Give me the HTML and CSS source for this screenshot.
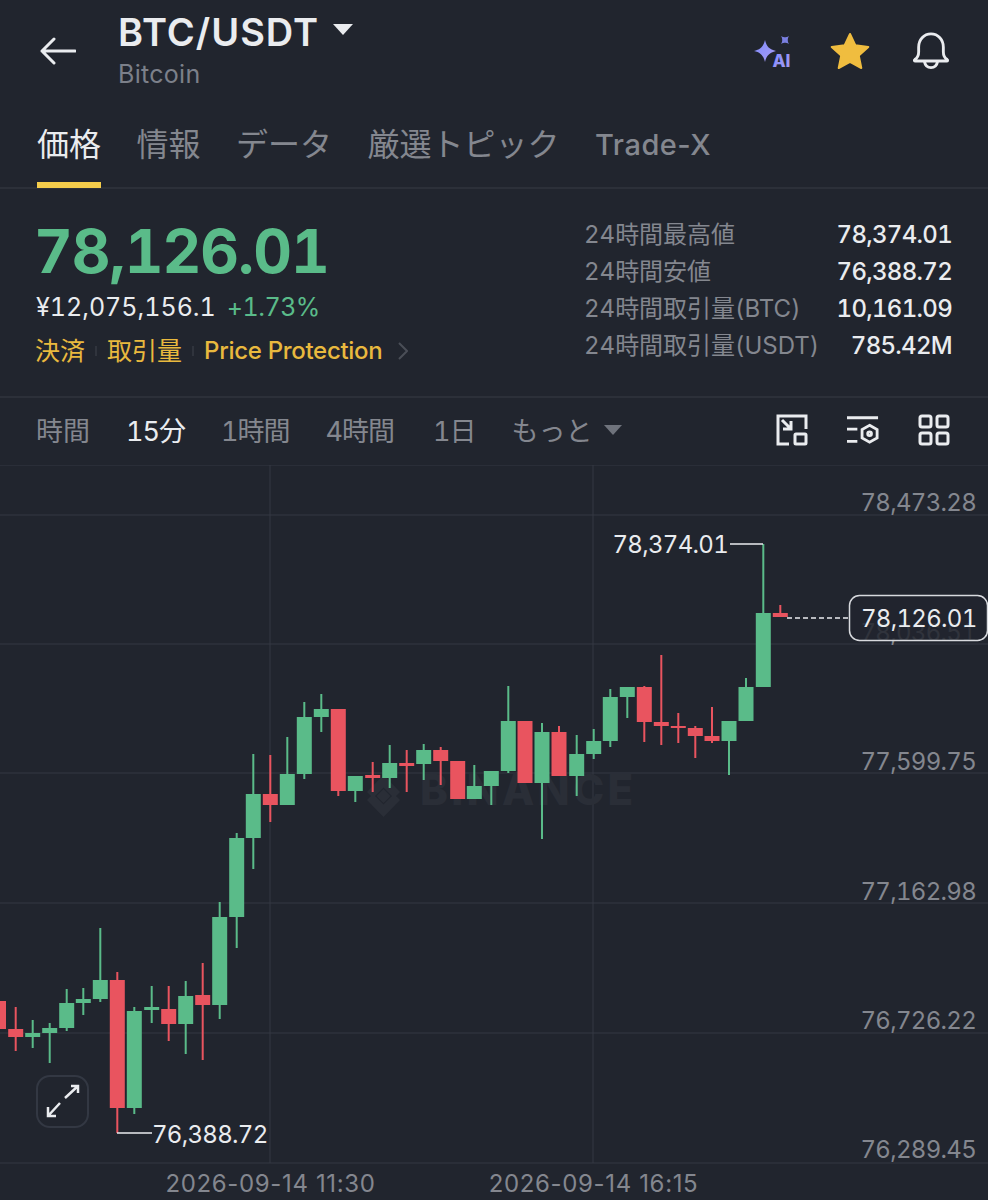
FILE: index.html
```html
<!DOCTYPE html>
<html lang="ja">
<head>
    <meta charset="UTF-8">
    <meta name="viewport" content="width=device-width, initial-scale=1.0">
    <title>BTC/USDT</title>
    <link rel="stylesheet" href="styles.css">
</head>
<body>
    <header class="top-bar">
        <svg class="back-icon" viewBox="0 0 36 28"><path d="M35 14H2M14 2L2 14l12 12"/></svg>
        <div class="pair">
            <div class="pair-name">BTC/USDT <span class="pair-caret"></span></div>
            <div class="pair-sub">Bitcoin</div>
        </div>
        <div class="top-actions">
            <svg class="icon-ai" viewBox="0 0 38 32">
                <defs>
                    <linearGradient id="ai-grad" x1="0" y1="0" x2="1" y2="1">
                        <stop offset="0" stop-color="#7f8cff"/>
                        <stop offset="1" stop-color="#a99cf0"/>
                    </linearGradient>
                </defs>
                <path class="spark" d="M11 4c1.500 6.500 4.500 9.500 11 11-6.500 1.500-9.500 4.500-11 11-1.500-6.500-4.500-9.500-11-11 6.500-1.500 9.500-4.500 11-11z"/>
                <path class="spark-small" d="M27 0c2 1.200 3 1.200 4 1.200S33 1.200 35 0c-1.200 2-1.200 3-1.200 4s0 2 1.200 4c-2-1.200-3-1.200-4-1.200S29 6.800 27 8c1.200-2 1.200-3 1.200-4S28.200 2 27 0z"/>
                <text class="ai-text" x="18.500" y="31">AI</text>
            </svg>
            <svg class="icon-star" viewBox="0 0 40 38"><path d="M20 2l5.300 11.200 13 1.700-9.500 8.700 2.500 12.400L20 29.800 8.700 36l2.500-12.400L1.700 14.900l13-1.700z"/></svg>
            <svg class="icon-bell" viewBox="0 0 40 40"><path d="M3 29c3-2 4-4 4-8v-5c0-8 5.500-14 13-14s13 6 13 14v5c0 4 1 6 4 8 1 .8.500 1.500-.5 1.500h-33C2.500 30.500 2 29.800 3 29zM13 31c.8 4 3.500 6.500 7 6.500s6.200-2.500 7-6.500"/></svg>
        </div>
    </header>

    <nav class="tabs">
        <a class="tab active">価格</a>
        <a class="tab">情報</a>
        <a class="tab">データ</a>
        <a class="tab">厳選トピック</a>
        <a class="tab tab-latin">Trade-X</a>
    </nav>

    <section class="stats">
        <div class="stats-left">
            <div class="last-price">78,126.01</div>
            <div class="fiat-row">
                <span class="fiat">¥12,075,156.1</span>
                <span class="change">+1.73%</span>
            </div>
            <div class="tag-row">
                <span>決済</span>
                <i class="tag-sep"></i>
                <span>取引量</span>
                <i class="tag-sep"></i>
                <span class="tag-latin">Price Protection</span>
                <svg class="tag-more" viewBox="0 0 10 18"><path d="M1 1l8 8-8 8"/></svg>
            </div>
        </div>
        <dl class="stats-right">
            <dt>24時間最高値</dt><dd>78,374.01</dd>
            <dt>24時間安値</dt><dd>76,388.72</dd>
            <dt>24時間取引量(BTC)</dt><dd>10,161.09</dd>
            <dt>24時間取引量(USDT)</dt><dd>785.42M</dd>
        </dl>
    </section>

    <div class="toolbar">
        <span class="range">時間</span>
        <span class="range range-num active">15分</span>
        <span class="range range-num">1時間</span>
        <span class="range range-num">4時間</span>
        <span class="range range-num range-day">1日</span>
        <span class="range">もっと</span>
        <span class="more-caret"></span>
        <div class="tool-icons">
            <svg class="tool-icon" viewBox="0 0 32 32">
                <path d="M13 30H2V2h28v13M6 6l9 9M15 7v8H7"/>
                <rect x="19" y="20" width="11" height="10" rx="1"/>
            </svg>
            <svg class="tool-icon" viewBox="0 0 34 32">
                <path d="M0 3h33M0 15h11M0 28h11M24 11l8 4.500v9L24 29l-8-4.500v-9z"/>
                <circle cx="24" cy="20" r="2"/>
            </svg>
            <svg class="tool-icon" viewBox="0 0 32 32">
                <rect x="2" y="2" width="11" height="11" rx="2"/>
                <rect x="19" y="2" width="11" height="11" rx="2"/>
                <rect x="2" y="19" width="11" height="11" rx="2"/>
                <rect x="19" y="19" width="11" height="11" rx="2"/>
            </svg>
        </div>
    </div>

    <div class="chart">
        <!-- viewBox keeps the screen's y values so candles read as pixel prices -->
        <svg class="chart-svg" viewBox="0 465 988 735">
            <path class="grid" d="M0 465H988M0 515H988M0 644H988M0 773H988M0 903H988M0 1033H988M0 1163H988M270 465V1163M593 465V1163"/>

            <text class="watermark" x="420" y="805">BINANCE</text>
            <path class="watermark-logo" d="M383.500 789l7 7-7 7-7-7zM367 800l6-6 10.500 10.500L394 794l6 6-16.500 17zM383.500 775l16.500 17-6 6-10.500-10.500L373 798l-6-6z"/>

            <g class="axis">
                <text x="976" y="511">78,473.28</text>
                <text x="976" y="641">78,036.51</text>
                <text x="976" y="770">77,599.75</text>
                <text x="976" y="900">77,162.98</text>
                <text x="976" y="1029">76,726.22</text>
                <text x="976" y="1158">76,289.45</text>
            </g>
            <g class="axis axis-time">
                <text x="270.500" y="1192">2026-09-14 11:30</text>
                <text x="593.500" y="1192">2026-09-14 16:15</text>
            </g>

            <path class="wick up" d="M32.700 1020V1048M49.700 1023V1063M66.700 989V1031M83.300 988V1015M100.300 928V1002M134.300 1007V1114M151.700 986V1023M185.700 981V1054M219.700 902V1019M236.700 833V948M253.300 754V869M287.300 737V805M304.300 702V779M321.300 694V732M355.300 776V802M389.700 745V788M423.700 744V780M474.300 765V799M491.300 771V805M508.300 686V773M542 723V839M576.700 735V796M593.700 729V759M610.300 689V747M627.300 687V718M729 721V775M746 678V721M763.300 544V687"/>
            <path class="wick down" d="M15.700 1007V1051M117.300 972V1133M168.700 986V1041M202.700 963V1060M270.300 755V822M338.300 709V796M372.700 762V792M406.700 750V792M440.700 747V785M559 726V776M644.300 686V742M661.300 655V745M678.300 713V743M695.300 726V758M712 707V743M780.300 605V617"/>
            <path class="body up" d="M25.200 1033h15V1037h-15zM42.200 1028h15V1033h-15zM59.200 1003h15V1028h-15zM75.800 999h15V1003h-15zM92.800 980h15V999h-15zM126.800 1011h15V1108h-15zM144.200 1007h15V1010h-15zM178.200 996h15V1024h-15zM212.200 917h15V1005h-15zM229.200 838h15V917h-15zM245.800 794h15V838h-15zM279.800 774h15V805h-15zM296.800 717h15V774h-15zM313.800 709h15V717h-15zM347.800 776h15V791h-15zM382.200 763h15V778h-15zM416.200 750h15V764h-15zM466.800 786h15V799h-15zM483.800 771h15V786h-15zM500.800 721h15V771h-15zM534.500 732h15V783h-15zM569.200 754h15V776h-15zM586.200 741h15V754h-15zM602.800 697h15V741h-15zM619.800 687h15V697h-15zM721.500 721h15V741h-15zM738.500 687h15V721h-15zM755.800 613h15V687h-15z"/>
            <path class="body down" d="M-9 1001h15V1029h-15zM8.200 1029h15V1037h-15zM109.800 980h15V1108h-15zM161.200 1009h15V1024h-15zM195.200 995h15V1005h-15zM262.800 794h15V805h-15zM330.800 709h15V791h-15zM365.200 775h15V778h-15zM399.200 763h15V766h-15zM433.200 750h15V761h-15zM450.200 761h15V799h-15zM517.500 721h15V783h-15zM551.500 732h15V776h-15zM636.800 687h15V722h-15zM653.800 722h15V726h-15zM670.800 726h15V728h-15zM687.800 728h15V736h-15zM704.500 736h15V741h-15zM772.800 613h15V617h-15z"/>

            <path class="marker-line" d="M730 544H763M117 1133H152"/>
            <text class="marker" x="612.500" y="553">78,374.01</text>
            <text class="marker" x="152" y="1143">76,388.72</text>

            <path class="last-line" d="M787 618H849"/>
            <rect class="last-box" x="849.500" y="595.500" width="138" height="45" rx="10"/>
            <text class="marker" x="861" y="627">78,126.01</text>

            <rect class="expand-box" x="37" y="1076" width="51" height="51" rx="13"/>
            <path class="expand-arrows" d="M65 1098l13-12M71 1086h7v7M60 1103l-12 13M48 1107v9h8"/>
        </svg>
    </div>
</body>
</html>
```

FILE: styles.css
```css
html, body {
    margin: 0;
    padding: 0;
}

body {
    width: 988px;
    height: 1200px;
    overflow: hidden;
    background-color: #21252e;
    color: #eaecef;
    font-family: Inter, "Noto Sans CJK JP", sans-serif;
    font-variant-numeric: tabular-nums;
}

.top-bar {
    display: flex;
    align-items: flex-start;
    height: 101px;
    padding: 0 38px 0 40px;
    box-sizing: border-box;
}

.back-icon {
    width: 36px;
    height: 28px;
    margin-top: 37px;
    fill: none;
    stroke: #eaecef;
    stroke-width: 3;
    stroke-linecap: round;
    stroke-linejoin: round;
}

.pair {
    margin-left: 42px;
    margin-top: 10px;
}

.pair-name {
    display: flex;
    align-items: center;
    font-size: 38px;
    line-height: 44px;
    font-weight: 600;
    letter-spacing: 1px;
    white-space: pre;
}

.pair-caret {
    width: 0;
    height: 0;
    margin: -6px 0 0 3px;
    border-left: 10px solid transparent;
    border-right: 10px solid transparent;
    border-top: 11px solid #eaecef;
}

.pair-sub {
    margin-top: 5px;
    font-size: 25px;
    line-height: 30px;
    color: #7c808a;
    letter-spacing: 0.300px;
}

.top-actions {
    display: flex;
    align-items: center;
    gap: 40px;
    margin: 31px 0 0 auto;
}

.icon-ai {
    width: 38px;
    height: 32px;
    margin-top: 3px;
    overflow: visible;
}

.spark {
    fill: url(#ai-grad);
}

.spark-small {
    fill: #7a7fe0;
}

.ai-text {
    font-size: 17px;
    font-weight: 800;
    fill: url(#ai-grad);
}

.icon-star {
    width: 40px;
    height: 38px;
    margin: 0 2px 0 -2px;
    fill: #f0bd3f;
    stroke: #f0bd3f;
    stroke-width: 2;
    stroke-linejoin: round;
}

.icon-bell {
    width: 38px;
    height: 38px;
    margin-top: 1px;
    fill: none;
    stroke: #eaecef;
    stroke-width: 3;
    stroke-linejoin: round;
}

.tabs {
    display: flex;
    gap: 35.500px;
    height: 88px;
    padding: 0 37px;
    box-sizing: border-box;
    border-bottom: 2px solid #2c3039;
}

.tab {
    height: 87px;
    box-sizing: border-box;
    padding-top: 21px;
    font-size: 32px;
    line-height: 46px;
    color: #84878f;
}

.tab.active {
    color: #eaecef;
    border-bottom: 6px solid #f5cd4b;
}

.tab-latin {
    font-size: 29px;
    font-weight: 500;
    font-variant-numeric: normal;
    letter-spacing: 0.500px;
}

.stats {
    display: flex;
    justify-content: space-between;
    height: 209px;
    padding: 0 36px;
    box-sizing: border-box;
    border-bottom: 2px solid #2c3039;
}

.last-price {
    margin: 25px 0 0 -2px;
    font-size: 60px;
    line-height: 74px;
    font-weight: 700;
    letter-spacing: -1px;
    color: #5abb89;
}

.fiat-row {
    display: flex;
    gap: 11px;
    margin-top: 2px;
    font-size: 25px;
    line-height: 34px;
}

.change {
    color: #5abb89;
    letter-spacing: -0.500px;
}

.tag-row {
    display: flex;
    align-items: center;
    margin: 9px 0 0 -1px;
    font-size: 25px;
    line-height: 36px;
    color: #e9b93e;
}

.tag-sep {
    width: 2px;
    height: 10px;
    margin: 0 10px;
    background-color: #30343d;
}

.tag-latin {
    font-size: 24px;
    font-weight: 500;
    letter-spacing: -0.300px;
}

.tag-more {
    width: 10px;
    height: 18px;
    margin-left: 16px;
    fill: none;
    stroke: #4a4e57;
    stroke-width: 2;
}

.stats-right {
    display: grid;
    grid-template-columns: auto 1fr;
    grid-auto-rows: 37px;
    width: 368px;
    margin: 27px 0 0;
    font-size: 24px;
    line-height: 37px;
}

.stats-right dt {
    color: #84878f;
    white-space: nowrap;
}

.stats-right dd {
    margin: 0;
    text-align: right;
    font-weight: 500;
    letter-spacing: -0.700px;
}

.toolbar {
    display: flex;
    align-items: center;
    gap: 36px;
    height: 67px;
    padding: 0 0 4px 36px;
    box-sizing: border-box;
    font-size: 27px;
    color: #84878f;
}

.range-num {
    letter-spacing: -1px;
}

.range-day {
    margin-left: 3px;
}

.range.active {
    color: #eaecef;
}

.more-caret {
    width: 0;
    height: 0;
    margin-left: -25px;
    border-left: 9px solid transparent;
    border-right: 9px solid transparent;
    border-top: 10px solid #6f737c;
}

.tool-icons {
    display: flex;
    align-items: center;
    gap: 39px;
    margin-left: auto;
    margin-right: 38px;
}

.tool-icon {
    width: 32px;
    height: 32px;
    fill: none;
    stroke: #eaecef;
    stroke-width: 3;
}

.chart-svg {
    display: block;
    width: 988px;
    height: 735px;
}

.grid {
    fill: none;
    stroke: #343843;
    stroke-width: 1;
}

.watermark {
    font-size: 42px;
    font-weight: 800;
    fill: #2a2e37;
    letter-spacing: 3.300px;
}

.watermark-logo {
    fill: #2a2e37;
}

.axis text {
    font-size: 24px;
    fill: #84878f;
    text-anchor: end;
    letter-spacing: -0.700px;
}

.axis-time text {
    text-anchor: middle;
    font-variant-numeric: normal;
    letter-spacing: 0.650px;
}

.wick {
    fill: none;
    stroke-width: 2;
}

.wick.up { stroke: #5abb89; }
.wick.down { stroke: #e9545f; }
.body.up { fill: #5abb89; }
.body.down { fill: #e9545f; }

.marker-line {
    fill: none;
    stroke: #eaecef;
    stroke-width: 1.500;
}

.marker {
    font-size: 24px;
    fill: #eaecef;
    letter-spacing: -0.700px;
}

.last-line {
    stroke: #eaecef;
    stroke-width: 1.500;
    stroke-dasharray: 5 3;
}

.last-box {
    fill: rgba(33, 37, 46, 0.85);
    stroke: #d8dade;
    stroke-width: 1.500;
}

.expand-box {
    fill: none;
    stroke: #333843;
    stroke-width: 2;
}

.expand-arrows {
    fill: none;
    stroke: #eaecef;
    stroke-width: 2.500;
}
```
